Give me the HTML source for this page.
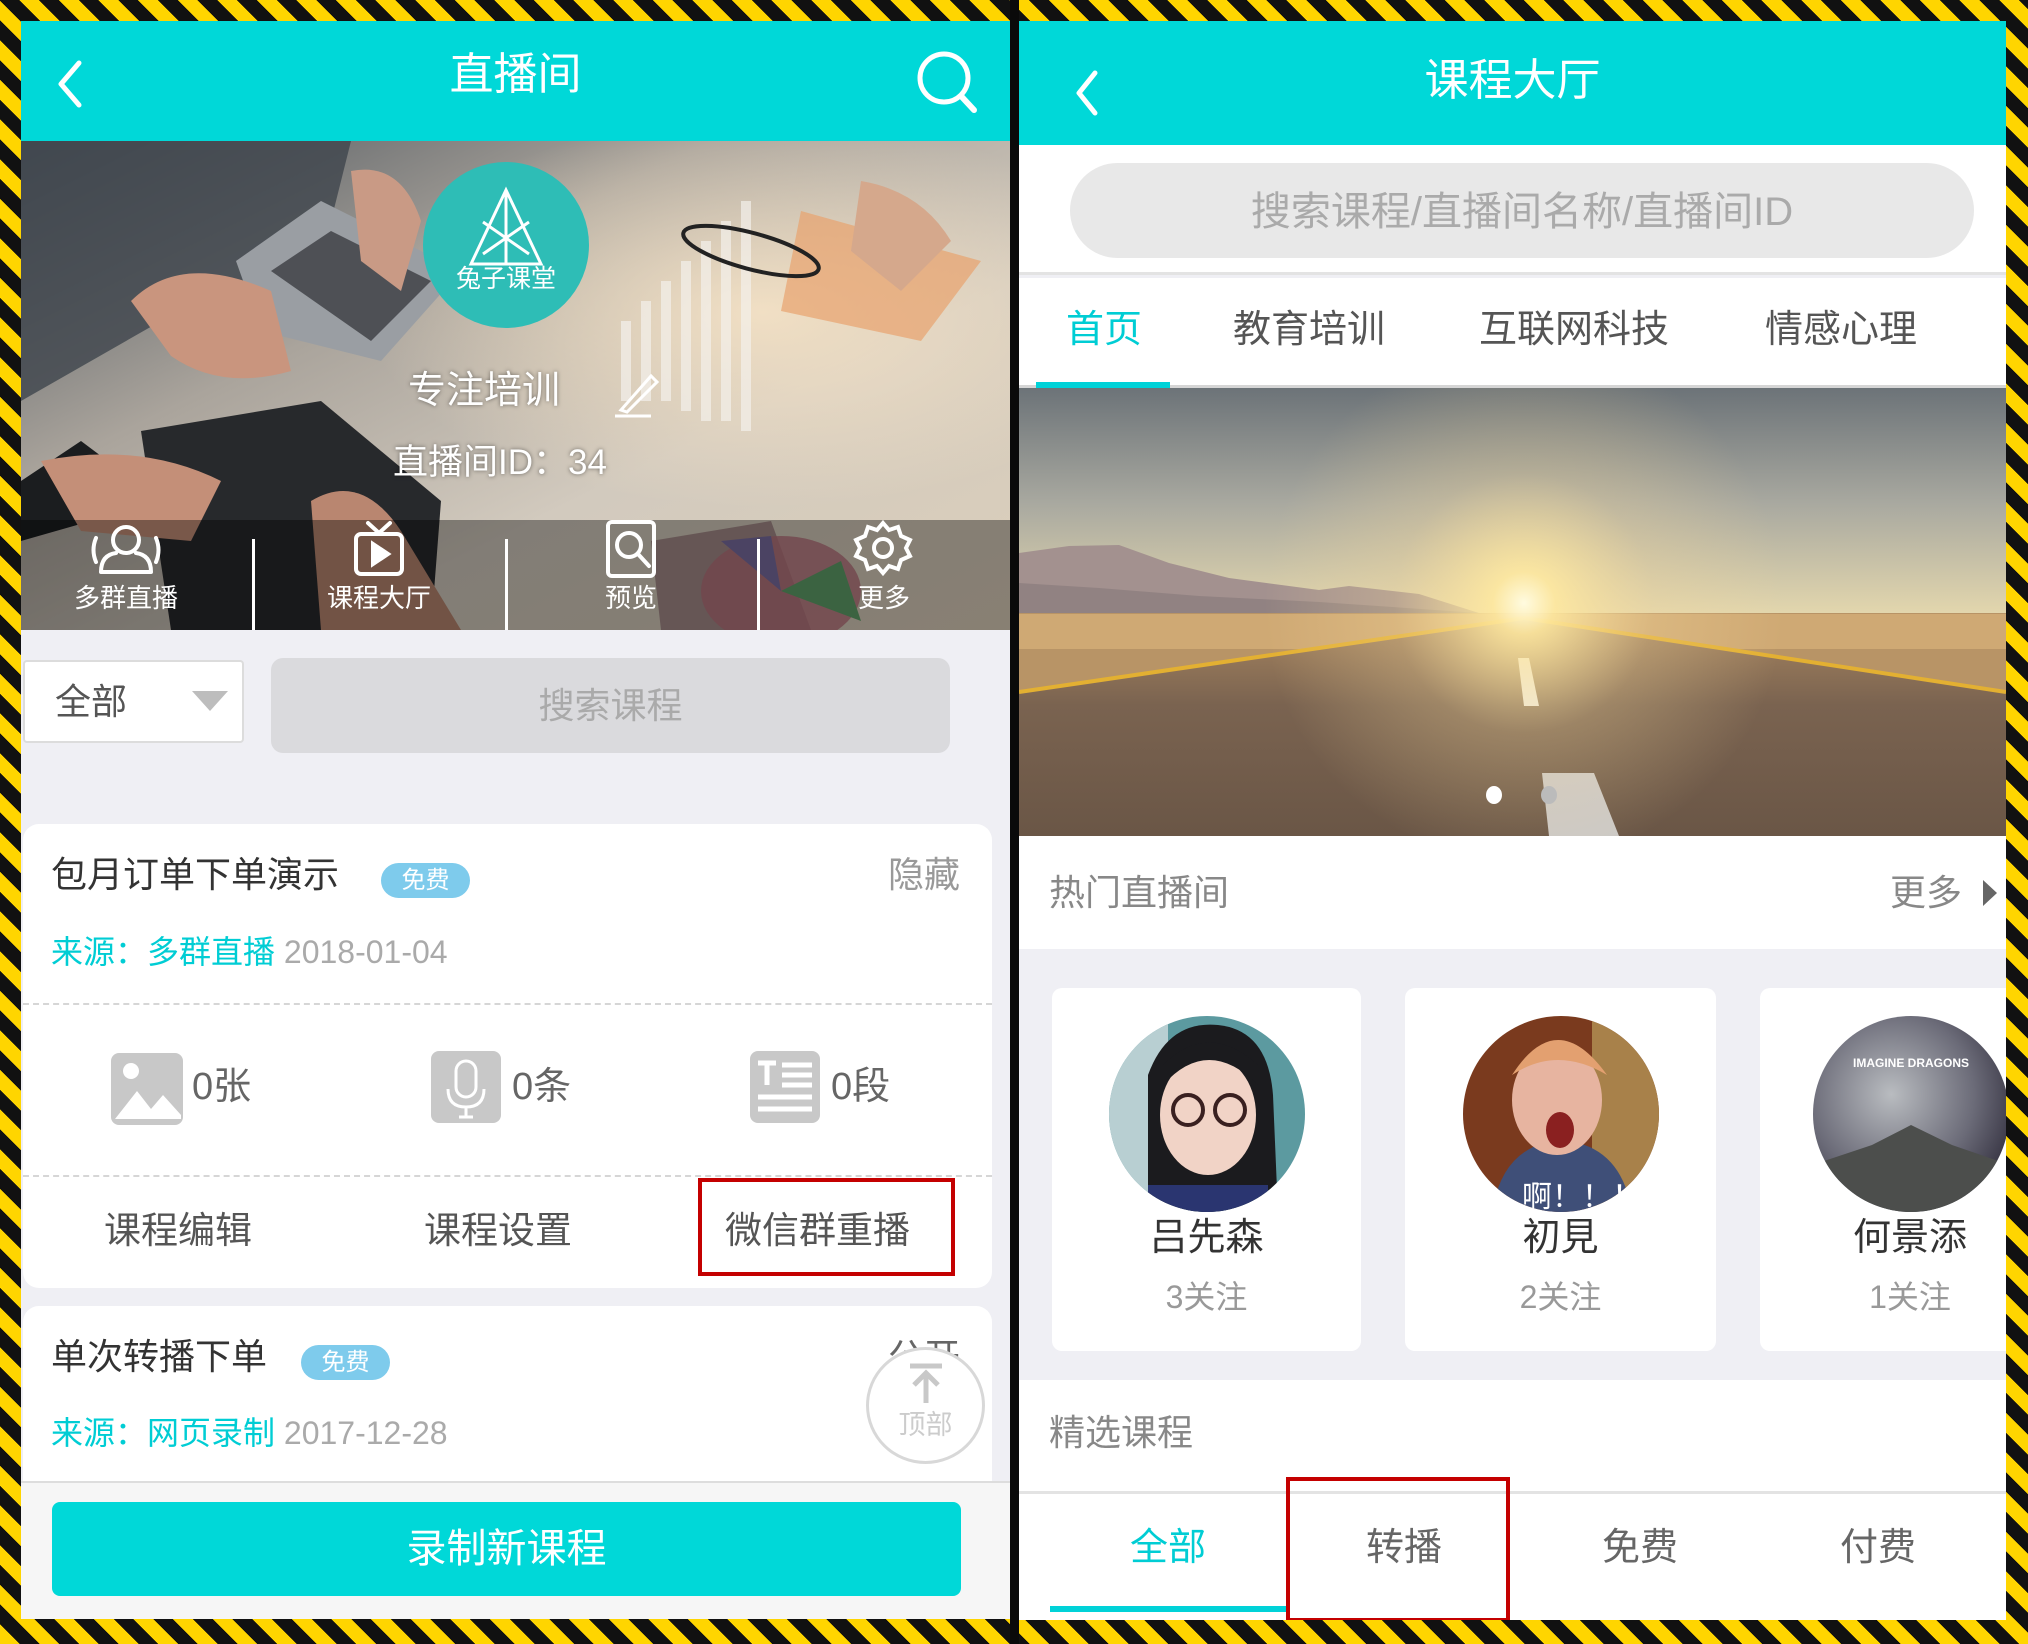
<!DOCTYPE html>
<html><head><meta charset="utf-8">
<style>
*{margin:0;padding:0;box-sizing:border-box}
html,body{width:2028px;height:1644px;overflow:hidden}
body{position:relative;font-family:"Liberation Sans","Noto Sans CJK SC",sans-serif;
background:repeating-linear-gradient(45deg,#ffd500 0 14px,#111 14px 28px);}
.a{position:absolute}
.t{position:absolute;white-space:nowrap}
.c{text-align:center}
</style></head><body>
<div class="a" style="left:1010px;top:0;width:9px;height:1644px;background:#0a0a0a"></div>

<!-- ============ LEFT PANEL ============ -->
<div class="a" style="left:21px;top:21px;width:989px;height:1598px;background:#efeff4;overflow:hidden">
  <div class="a" style="left:0;top:0;width:989px;height:120px;background:#00d8d8"></div>
  <svg class="a" style="left:28px;top:30px" width="40" height="60"><path d="M30 12 L12 33 L30 54" stroke="#fff" stroke-width="5" fill="none" stroke-linecap="round" stroke-linejoin="round"/></svg>
  <div class="t c" style="left:0;width:989px;top:28px;line-height:52px;font-size:44px;color:#fff">直播间</div>
  <svg class="a" style="left:893px;top:26px" width="70" height="70"><circle cx="30" cy="31" r="24" stroke="#fff" stroke-width="5" fill="none"/><path d="M47 49 L60 63" stroke="#fff" stroke-width="6" stroke-linecap="round"/></svg>

  <svg class="a" style="left:0;top:120px" width="989" height="489">
    <defs>
      <linearGradient id="pg" x1="0" y1="0" x2="1" y2="1"><stop offset="0" stop-color="#4b535b"/><stop offset=".35" stop-color="#aaa49c"/><stop offset=".65" stop-color="#d2cabe"/><stop offset="1" stop-color="#dccfba"/></linearGradient>
      <radialGradient id="gl" cx=".75" cy=".35" r=".4"><stop offset="0" stop-color="#f6e3c6" stop-opacity=".9"/><stop offset="1" stop-color="#f6e3c6" stop-opacity="0"/></radialGradient>
    </defs>
    <rect width="989" height="489" fill="url(#pg)"/>
    <rect width="989" height="489" fill="url(#gl)"/>
    <path d="M0 0 L330 0 L300 120 L140 180 L0 260 Z" fill="#3e454c" opacity=".8"/>
    <path d="M215 120 L300 60 L440 130 L360 220 L240 190 Z" fill="#9a9ea3"/>
    <path d="M250 130 L310 90 L410 140 L350 200 Z" fill="#2d2f33" opacity=".7"/>
    <path d="M110 160 Q160 110 250 150 L270 230 Q200 250 150 215 Z" fill="#c9957e"/>
    <path d="M330 30 Q380 20 400 80 L380 150 L340 120 Z" fill="#c99a85"/>
    <path d="M0 340 L60 300 L100 330 L70 380 L0 400 Z" fill="#1b1d1f"/>
    <path d="M120 290 L300 260 L420 360 L410 489 L150 489 Z" fill="#27292c"/>
    <path d="M20 320 Q120 300 200 340 L170 400 L60 390 Z" fill="#c48f78"/>
    <path d="M290 360 Q340 330 380 390 L440 489 L300 489 Z" fill="#b98670"/>
    <path d="M780 70 L960 120 L900 200 L760 170 Z" fill="#e8a36e" opacity=".7"/>
    <path d="M840 40 Q900 50 930 100 L880 150 L830 110 Z" fill="#d5a88c"/>
    <g fill="#f4f1ec" opacity=".7"><rect x="600" y="180" width="10" height="80"/><rect x="620" y="160" width="10" height="100"/><rect x="640" y="140" width="10" height="120"/><rect x="660" y="120" width="10" height="150"/><rect x="680" y="100" width="10" height="180"/><rect x="700" y="80" width="10" height="200"/><rect x="720" y="60" width="10" height="230"/></g>
    <ellipse cx="730" cy="110" rx="70" ry="18" fill="none" stroke="#222" stroke-width="4" transform="rotate(15 730 110)"/>
    <path d="M630 400 L750 380 L790 489 L640 489 Z" fill="#a58b8a"/>
    <ellipse cx="760" cy="450" rx="80" ry="55" fill="#b9717c" opacity=".8"/>
    <path d="M760 450 L700 400 L750 395 Z" fill="#7a6da0"/>
    <path d="M760 450 L820 420 L840 480 Z" fill="#5fa06a"/>
    <rect y="379" width="989" height="110" fill="#000" opacity=".38"/>
  </svg>
  <div class="a" style="left:402px;top:141px;width:166px;height:166px;border-radius:50%;background:#2ebdb6"></div>
  <svg class="a" style="left:402px;top:141px" width="166" height="166"><path d="M83 28 L48 102 L118 102 Z M83 28 L83 102 M60 60 L106 92 M106 60 L60 92" stroke="#fff" stroke-width="3" fill="none"/></svg>
  <div class="t c" style="left:402px;width:166px;top:243px;font-size:25px;color:#fff;line-height:30px">兔子课堂</div>
  <div class="t" style="left:387px;top:347px;font-size:38px;color:#fff;line-height:46px;text-shadow:0 0 4px rgba(0,0,0,.5)">专注培训</div>
  <svg class="a" style="left:590px;top:345px" width="50" height="55"><path d="M10 44 L40 10 L46 16 L16 46 Z" stroke="#fff" stroke-width="3" fill="none"/><path d="M4 50 L40 50" stroke="#fff" stroke-width="3"/></svg>
  <div class="t" style="left:372px;top:420px;font-size:35px;color:#fff;line-height:44px;text-shadow:0 0 4px rgba(0,0,0,.5)">直播间ID：34</div>
  <svg class="a" style="left:0;top:499px" width="989" height="110">
    <g stroke="#fff" stroke-width="4" fill="none" stroke-linecap="round">
      <circle cx="105" cy="20" r="13"/><path d="M80 52 Q80 35 95 33 M130 52 Q130 35 115 33 M80 52 L130 52"/><path d="M75 18 Q70 30 75 42 M135 18 Q140 30 135 42"/>
      <rect x="335" y="14" width="46" height="40" rx="5"/><path d="M347 3 L358 13 L369 3"/><path d="M352 24 L352 44 L367 34 Z" fill="#fff"/>
      <rect x="587" y="2" width="46" height="54" rx="4"/><circle cx="608" cy="25" r="12"/><path d="M617 34 L628 46"/>
      <circle cx="862" cy="28" r="9"/><path d="M862 3 L868 10 L877 7 L880 16 L889 20 L885 28 L889 36 L880 40 L877 49 L868 46 L862 53 L856 46 L847 49 L844 40 L835 36 L839 28 L835 20 L844 16 L847 7 L856 10 Z"/>
    </g>
    <g fill="#fff"><rect x="231" y="19" width="3" height="98"/><rect x="484" y="19" width="3" height="98"/><rect x="736" y="19" width="3" height="98"/></g>
  </svg>
  <div class="t c" style="left:5px;width:200px;top:560px;font-size:26px;color:#fff;line-height:34px">多群直播</div>
  <div class="t c" style="left:258px;width:200px;top:560px;font-size:26px;color:#fff;line-height:34px">课程大厅</div>
  <div class="t c" style="left:510px;width:200px;top:560px;font-size:26px;color:#fff;line-height:34px">预览</div>
  <div class="t c" style="left:763px;width:200px;top:560px;font-size:26px;color:#fff;line-height:34px">更多</div>

  <div class="a" style="left:2px;top:639px;width:221px;height:83px;background:#fff;border:2px solid #dcdcdc;border-radius:4px"></div>
  <div class="t" style="left:34px;top:659px;font-size:36px;color:#555;line-height:44px">全部</div>
  <svg class="a" style="left:171px;top:670px" width="36" height="22"><path d="M0 0 L36 0 L18 20 Z" fill="#bdbdbd"/></svg>
  <div class="a" style="left:250px;top:637px;width:679px;height:95px;background:#dadadd;border-radius:12px"></div>
  <div class="t c" style="left:250px;width:679px;top:663px;font-size:36px;color:#aaa;line-height:44px">搜索课程</div>

  <div class="a" style="left:2px;top:803px;width:969px;height:464px;background:#fff;border-radius:16px"></div>
  <div class="t" style="left:30px;top:832px;font-size:36px;color:#333;line-height:44px">包月订单下单演示</div>
  <div class="t c" style="left:360px;top:842px;width:89px;height:35px;border-radius:18px;background:#7ecbec;color:#fff;font-size:24px;line-height:35px">免费</div>
  <div class="t" style="left:867px;top:832px;font-size:36px;color:#999;line-height:44px">隐藏</div>
  <div class="t" style="left:30px;top:911px;font-size:32px;color:#00cdd4;line-height:40px">来源：多群直播 <span style="color:#aaa">2018-01-04</span></div>
  <div class="a" style="left:2px;top:982px;width:969px;border-top:2px dashed #d6d6d6"></div>
  <svg class="a" style="left:90px;top:1032px" width="72" height="72"><rect width="72" height="72" rx="8" fill="#c8c8c8"/><circle cx="20" cy="18" r="8" fill="#fff"/><path d="M4 66 L26 38 L40 56 L52 42 L70 62 L70 66 Z" fill="#fff"/></svg>
  <div class="t" style="left:171px;top:1043px;font-size:38px;color:#666;line-height:46px">0张</div>
  <svg class="a" style="left:410px;top:1030px" width="70" height="72"><rect width="70" height="72" rx="8" fill="#c8c8c8"/><rect x="25" y="10" width="20" height="36" rx="10" fill="none" stroke="#fff" stroke-width="3"/><path d="M17 38 Q17 56 35 56 Q53 56 53 38 M35 56 L35 66 M28 66 L42 66" stroke="#fff" stroke-width="3" fill="none"/></svg>
  <div class="t" style="left:491px;top:1043px;font-size:38px;color:#666;line-height:46px">0条</div>
  <svg class="a" style="left:729px;top:1030px" width="70" height="72"><rect width="70" height="72" rx="8" fill="#c8c8c8"/><path d="M8 12 L26 12 M17 12 L17 34 M32 14 L62 14 M32 24 L62 24 M32 34 L62 34 M8 46 L62 46 M8 58 L62 58" stroke="#fff" stroke-width="5"/></svg>
  <div class="t" style="left:810px;top:1043px;font-size:38px;color:#666;line-height:46px">0段</div>
  <div class="a" style="left:2px;top:1154px;width:969px;border-top:2px dashed #d6d6d6"></div>
  <div class="t" style="left:83px;top:1187px;font-size:37px;color:#555;line-height:46px">课程编辑</div>
  <div class="t" style="left:403px;top:1187px;font-size:37px;color:#555;line-height:46px">课程设置</div>
  <div class="t" style="left:704px;top:1187px;font-size:37px;color:#555;line-height:46px">微信群重播</div>
  <div class="a" style="left:677px;top:1157px;width:257px;height:98px;border:4px solid #c40000"></div>

  <div class="a" style="left:2px;top:1285px;width:969px;height:200px;background:#fff;border-radius:16px"></div>
  <div class="t" style="left:30px;top:1314px;font-size:36px;color:#333;line-height:44px">单次转播下单</div>
  <div class="t c" style="left:280px;top:1324px;width:89px;height:35px;border-radius:18px;background:#7ecbec;color:#fff;font-size:24px;line-height:35px">免费</div>
  <div class="t" style="left:867px;top:1314px;font-size:36px;color:#666;line-height:44px">公开</div>
  <div class="t" style="left:30px;top:1392px;font-size:32px;color:#00cdd4;line-height:40px">来源：网页录制 <span style="color:#aaa">2017-12-28</span></div>
  <div class="a" style="left:845px;top:1326px;width:119px;height:117px;border-radius:50%;background:#fff;border:3px solid #d8d8d8"></div>
  <svg class="a" style="left:885px;top:1340px" width="40" height="45"><path d="M4 5 L36 5 M20 12 L20 42 M8 24 L20 12 L32 24" stroke="#c8c8c8" stroke-width="5" fill="none"/></svg>
  <div class="t c" style="left:845px;width:119px;top:1387px;font-size:27px;color:#ccc;line-height:34px">顶部</div>

  <div class="a" style="left:0;top:1460px;width:989px;height:140px;background:#f6f6f6;border-top:2px solid #ddd"></div>
  <div class="a" style="left:31px;top:1481px;width:909px;height:94px;background:#00d8d8;border-radius:8px"></div>
  <div class="t c" style="left:31px;width:909px;top:1504px;font-size:40px;color:#fff;line-height:48px">录制新课程</div>
</div>

<!-- ============ RIGHT PANEL ============ -->
<div class="a" style="left:1019px;top:21px;width:987px;height:1599px;background:#efeff4;overflow:hidden">
  <div class="a" style="left:0;top:0;width:987px;height:124px;background:#00d8d8"></div>
  <svg class="a" style="left:48px;top:42px" width="40" height="60"><path d="M28 10 L12 30 L28 50" stroke="#fff" stroke-width="5" fill="none" stroke-linecap="round" stroke-linejoin="round"/></svg>
  <div class="t c" style="left:0;width:987px;top:34px;line-height:52px;font-size:44px;color:#fff">课程大厅</div>
  <div class="a" style="left:0;top:124px;width:987px;height:130px;background:#fff;border-bottom:3px solid #e3e3e3"></div>
  <div class="a" style="left:51px;top:142px;width:904px;height:95px;background:#e8e8e8;border-radius:48px"></div>
  <div class="t c" style="left:51px;width:904px;top:167px;font-size:40px;color:#aaa;line-height:48px">搜索课程/直播间名称/直播间ID</div>
  <div class="a" style="left:0;top:257px;width:987px;height:110px;background:#fff;border-bottom:3px solid #d5d5d5"></div>
  <div class="t" style="left:47px;top:286px;font-size:38px;color:#00cdd4;line-height:46px">首页</div>
  <div class="t" style="left:214px;top:286px;font-size:38px;color:#555;line-height:46px">教育培训</div>
  <div class="t" style="left:460px;top:286px;font-size:38px;color:#555;line-height:46px">互联网科技</div>
  <div class="t" style="left:746px;top:286px;font-size:38px;color:#555;line-height:46px">情感心理</div>
  <div class="a" style="left:17px;top:361px;width:134px;height:6px;background:#00d2d8"></div>

  <svg class="a" style="left:0;top:367px" width="987" height="448">
    <defs>
      <linearGradient id="sky" x1="0" y1="0" x2="0" y2="1"><stop offset="0" stop-color="#6c7378"/><stop offset=".5" stop-color="#a9a9a0"/><stop offset="1" stop-color="#e6d9ae"/></linearGradient>
      <radialGradient id="sun" cx="505" cy="215" r="260" gradientUnits="userSpaceOnUse"><stop offset="0" stop-color="#fffbe0"/><stop offset=".12" stop-color="#ffe9a0" stop-opacity=".9"/><stop offset=".5" stop-color="#f3d79a" stop-opacity=".3"/><stop offset="1" stop-color="#f3d79a" stop-opacity="0"/></radialGradient>
      <linearGradient id="road" x1="0" y1="0" x2="0" y2="1"><stop offset="0" stop-color="#a88660"/><stop offset=".4" stop-color="#7a6350"/><stop offset="1" stop-color="#6a5646"/></linearGradient>
    </defs>
    <rect width="987" height="232" fill="url(#sky)"/>
    <path d="M0 165 L50 158 L100 157 L150 175 L210 190 L270 198 L300 202 L330 198 L400 206 L460 225 L0 225 Z" fill="#a3918f"/>
    <path d="M0 195 L80 200 L180 208 L300 214 L460 225 L0 225 Z" fill="#86787a" opacity=".6"/>
    <rect y="225" width="987" height="223" fill="#b89466"/>
    <rect y="226" width="987" height="35" fill="#cfa974"/>
    <path d="M505 230 L0 304 L0 448 L987 448 L987 304 Z" fill="url(#road)"/>
    <path d="M505 230 L0 304 M505 230 L987 304" stroke="#e3b032" stroke-width="4"/>
    <path d="M499 270 L510 270 L520 318 L505 318 Z" fill="#eee"/>
    <path d="M523 385 L575 385 L600 448 L530 448 Z" fill="#ddd" opacity=".85"/>
    <rect width="987" height="448" fill="url(#sun)"/>
    <ellipse cx="475" cy="407" rx="8" ry="9" fill="#fff"/>
    <ellipse cx="530" cy="407" rx="8" ry="9" fill="#bbb"/>
  </svg>

  <div class="a" style="left:0;top:815px;width:987px;height:113px;background:#fff"></div>
  <div class="t" style="left:30px;top:850px;font-size:36px;color:#888;line-height:44px">热门直播间</div>
  <div class="t" style="left:871px;top:850px;font-size:36px;color:#888;line-height:44px">更多</div>
  <svg class="a" style="left:964px;top:859px" width="16" height="26"><path d="M0 0 L14 13 L0 26 Z" fill="#666"/></svg>

  <div class="a" style="left:33px;top:967px;width:309px;height:363px;background:#fff;border-radius:10px"></div>
  <div class="a" style="left:386px;top:967px;width:311px;height:363px;background:#fff;border-radius:10px"></div>
  <div class="a" style="left:741px;top:967px;width:300px;height:363px;background:#fff;border-radius:10px"></div>

  <svg class="a" style="left:89px;top:994px" width="198" height="198">
    <defs><clipPath id="c1"><circle cx="99" cy="99" r="98"/></clipPath>
    <radialGradient id="a3" cx=".4" cy=".4" r=".7"><stop offset="0" stop-color="#b9bcc0"/><stop offset=".6" stop-color="#6b6b78"/><stop offset="1" stop-color="#2e2b3a"/></radialGradient></defs>
    <g clip-path="url(#c1)"><rect width="198" height="198" fill="#5c9aa0"/><rect width="60" height="198" fill="#b8cfd2"/>
    <path d="M40 198 L40 60 Q60 5 110 10 Q160 15 165 80 L170 198 Z" fill="#1b1b1e"/>
    <ellipse cx="100" cy="100" rx="48" ry="60" fill="#f1d3c6"/><path d="M55 70 Q100 20 150 70 L150 50 Q100 5 55 50Z" fill="#1b1b1e"/>
    <circle cx="80" cy="95" r="15" fill="none" stroke="#3a2020" stroke-width="4"/><circle cx="122" cy="95" r="15" fill="none" stroke="#3a2020" stroke-width="4"/>
    <rect x="40" y="170" width="120" height="28" fill="#2a3570"/></g></svg>
  <svg class="a" style="left:443px;top:994px" width="198" height="198">
    <defs><clipPath id="c2"><circle cx="99" cy="99" r="98"/></clipPath></defs>
    <g clip-path="url(#c2)"><rect width="198" height="198" fill="#7a3a1e"/><rect x="130" width="68" height="198" fill="#a8814a"/>
    <path d="M30 198 Q40 130 99 125 Q160 130 170 198 Z" fill="#3f4f78"/>
    <ellipse cx="95" cy="85" rx="45" ry="55" fill="#e7b4a0"/><path d="M50 60 Q95 -10 145 60 Q95 30 50 60Z" fill="#e3a070"/>
    <ellipse cx="98" cy="115" rx="14" ry="18" fill="#8a2020"/></g>
    <text x="60" y="192" font-size="30" fill="#fff" font-family="Liberation Sans,Noto Sans CJK SC,sans-serif">啊！！！</text></svg>
  <svg class="a" style="left:793px;top:994px" width="198" height="198">
    <defs><clipPath id="c3"><circle cx="99" cy="99" r="98"/></clipPath></defs>
    <g clip-path="url(#c3)"><rect width="198" height="198" fill="url(#a3)"/>
    <path d="M0 198 L0 150 L60 130 L99 110 L140 130 L198 150 L198 198 Z" fill="#4c4e4c"/></g>
    <text x="99" y="52" font-size="12" fill="#fff" text-anchor="middle" font-family="Liberation Sans,sans-serif" font-weight="bold">IMAGINE DRAGONS</text></svg>

  <div class="t c" style="left:33px;width:309px;top:1194px;font-size:38px;color:#333;line-height:46px">吕先森</div>
  <div class="t c" style="left:386px;width:311px;top:1194px;font-size:38px;color:#333;line-height:46px">初見</div>
  <div class="t c" style="left:741px;width:300px;top:1194px;font-size:38px;color:#333;line-height:46px">何景添</div>
  <div class="t c" style="left:33px;width:309px;top:1256px;font-size:32px;color:#999;line-height:40px">3关注</div>
  <div class="t c" style="left:386px;width:311px;top:1256px;font-size:32px;color:#999;line-height:40px">2关注</div>
  <div class="t c" style="left:741px;width:300px;top:1256px;font-size:32px;color:#999;line-height:40px">1关注</div>

  <div class="a" style="left:0;top:1359px;width:987px;height:240px;background:#fff"></div>
  <div class="t" style="left:30px;top:1390px;font-size:36px;color:#888;line-height:44px">精选课程</div>
  <div class="a" style="left:0;top:1470px;width:987px;height:3px;background:#e3e3e3"></div>
  <div class="t" style="left:111px;top:1504px;font-size:38px;color:#00cdd4;line-height:46px">全部</div>
  <div class="t" style="left:347px;top:1504px;font-size:38px;color:#666;line-height:46px">转播</div>
  <div class="t" style="left:583px;top:1504px;font-size:38px;color:#666;line-height:46px">免费</div>
  <div class="t" style="left:821px;top:1504px;font-size:38px;color:#666;line-height:46px">付费</div>
  <div class="a" style="left:31px;top:1585px;width:236px;height:6px;background:#00d2d8"></div>
  <div class="a" style="left:267px;top:1456px;width:224px;height:145px;border:4px solid #c40000"></div>
</div>
</body></html>
